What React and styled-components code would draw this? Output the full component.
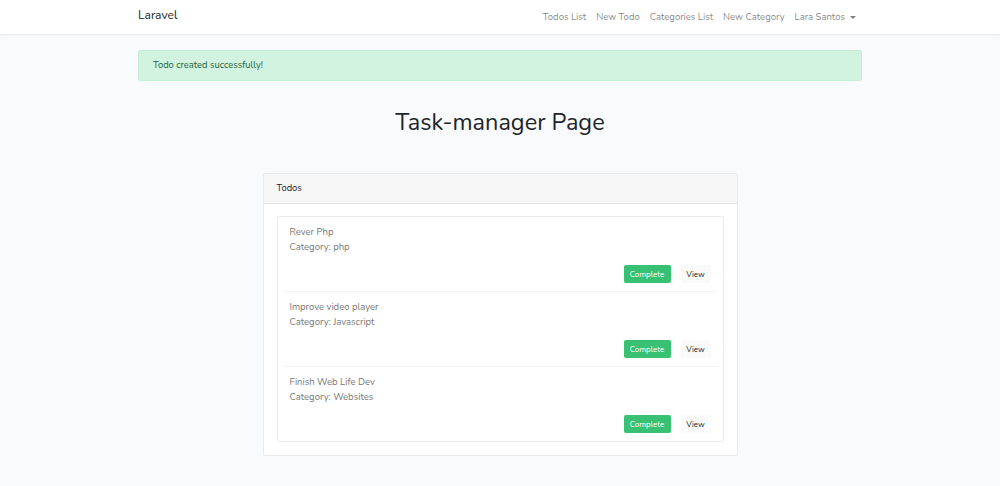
import styled, { createGlobalStyle } from 'styled-components';

const GlobalStyle = createGlobalStyle`
  * { box-sizing: border-box; }
  body {
    margin: 0;
    background: #f8fafc;
    font-family: "Nunito", "Lato", "Open Sans", sans-serif;
    font-size: 9.4px;
    color: #212529;
    line-height: 1.6;
  }
`;

const NavBar = styled.nav`
  height: 34px;
  background: #fff;
  box-shadow: 0 1px 2px rgba(0, 0, 0, 0.075);
  display: flex;
  align-items: center;
`;

const Container = styled.div`
  width: 724px;
  margin: 0 auto;
  display: flex;
  align-items: center;
  justify-content: space-between;
`;

const Brand = styled.a`
  font-size: 12px;
  color: #212529;
  text-decoration: none;
  margin-top: -2px;
`;

const NavLinks = styled.ul`
  display: flex;
  list-style: none;
  margin: 0;
  padding: 0;
`;

const NavLink = styled.li`
  padding: 0 5px;
  color: rgba(0, 0, 0, 0.5);
  font-size: 9.5px;
  display: flex;
  align-items: center;
  &:last-child { padding-right: 6px; }
`;

const Caret = styled.span`
  display: inline-block;
  margin-left: 5px;
  border-top: 3px solid rgba(0, 0, 0, 0.5);
  border-left: 3px solid transparent;
  border-right: 3px solid transparent;
`;

const Main = styled.main`
  padding-top: 16px;
`;

const Alert = styled.div`
  width: 724px;
  margin: 0 auto;
  height: 31px;
  padding: 0 14px;
  display: flex;
  align-items: center;
  background: #d1f3e0;
  border: 1px solid #c1eed5;
  border-radius: 2.5px;
  color: #1d643b;
`;

const Title = styled.h1`
  margin: 27px 0 0;
  text-align: center;
  font-size: 23.5px;
  font-weight: 400;
  line-height: 1.2;
  color: #212529;
`;

const Card = styled.section`
  width: 475px;
  margin: 37px auto 0;
  background: #fff;
  border: 1px solid rgba(0, 0, 0, 0.08);
  border-radius: 2.5px;
`;

const CardHeader = styled.div`
  height: 30px;
  padding: 0 13px;
  display: flex;
  align-items: center;
  background: rgba(0, 0, 0, 0.03);
  border-bottom: 1px solid rgba(0, 0, 0, 0.08);
`;

const CardBody = styled.div`
  padding: 12px 13px 13px;
`;

const List = styled.div`
  border: 1px solid rgba(0, 0, 0, 0.08);
  border-radius: 2px;
`;

const Item = styled.div`
  height: ${({ $last }) => ($last ? '74px' : '75px')};
  margin: 0 6px;
  padding: 7px 6px 0;
  display: flex;
  flex-direction: column;
  border-bottom: ${({ $last }) => ($last ? 'none' : '1px solid rgba(0, 0, 0, 0.05)')};
`;

const ItemText = styled.div`
  color: #777;
  font-size: 9.5px;
  line-height: 15px;
`;

const Actions = styled.div`
  margin-top: auto;
  margin-bottom: 8px;
  display: flex;
  justify-content: flex-end;
  gap: 10px;
`;

const Button = styled.button`
  height: 18px;
  padding: 0 ${({ $variant }) => ($variant === 'success' ? '6px' : '5px')};
  min-width: ${({ $variant }) => ($variant === 'success' ? '47px' : '30px')};
  border: none;
  border-radius: 2px;
  font-family: inherit;
  font-size: 8px;
  background: ${({ $variant }) => ($variant === 'success' ? '#38c172' : '#fafafa')};
  color: ${({ $variant }) => ($variant === 'success' ? '#fff' : '#212529')};
`;

const todos = [
  { name: 'Rever Php', category: 'php' },
  { name: 'Improve video player', category: 'Javascript' },
  { name: 'Finish Web Life Dev', category: 'Websites' },
];

export default function App() {
  return (
    <>
      <GlobalStyle />
      <NavBar>
        <Container>
          <Brand>Laravel</Brand>
          <NavLinks>
            <NavLink>Todos List</NavLink>
            <NavLink>New Todo</NavLink>
            <NavLink>Categories List</NavLink>
            <NavLink>New Category</NavLink>
            <NavLink>
              Lara Santos <Caret />
            </NavLink>
          </NavLinks>
        </Container>
      </NavBar>
      <Main>
        <Alert>Todo created successfully!</Alert>
        <Title>Task-manager Page</Title>
        <Card>
          <CardHeader>Todos</CardHeader>
          <CardBody>
            <List>
              {todos.map((todo, i) => (
                <Item key={todo.name} $last={i === todos.length - 1}>
                  <ItemText>{todo.name}</ItemText>
                  <ItemText>Category: {todo.category}</ItemText>
                  <Actions>
                    <Button $variant="success">Complete</Button>
                    <Button>View</Button>
                  </Actions>
                </Item>
              ))}
            </List>
          </CardBody>
        </Card>
      </Main>
    </>
  );
}
